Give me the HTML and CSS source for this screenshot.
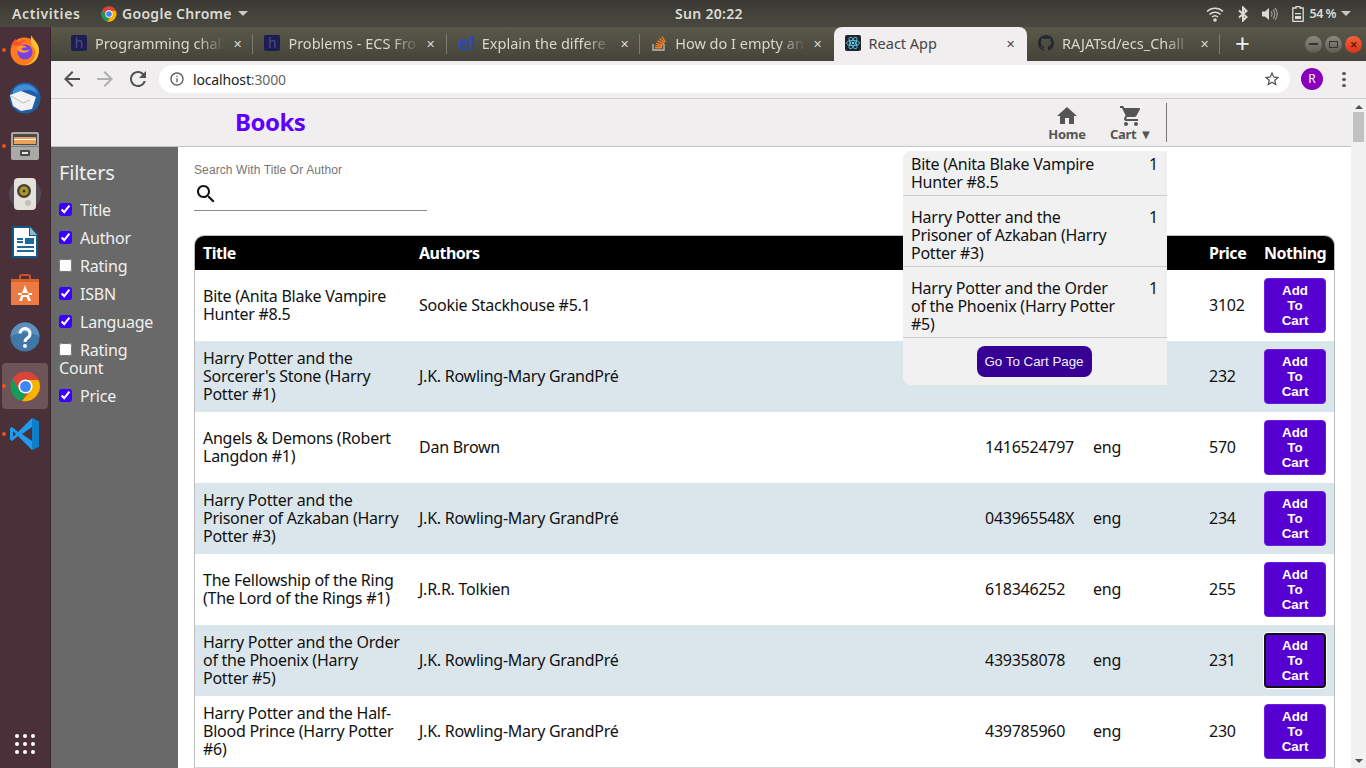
FILE: index.html
```html
<!DOCTYPE html>
<html lang="en">
<head>
    <meta charset="UTF-8">
    <meta name="viewport" content="width=device-width, initial-scale=1.0">
    <title>React App</title>

    <link rel="stylesheet" href="styles.css">
</head>
<body>

    <svg class="defs" width="0" height="0">
        <symbol id="chrome-logo" viewBox="0 0 48 48">
            <circle cx="24" cy="24" r="23" fill="#db4437"/>
            <path d="M24 24 4 35.500A23 23 0 0 1 4.100 12.500L14 29z" fill="#0f9d58"/>
            <path d="M4 35.500 14 29l10-5 4 3-9.500 19.300A23 23 0 0 1 4 35.500z" fill="#0f9d58"/>
            <path d="M24 14h20a23 23 0 0 1-25.500 32.300L33 29z" fill="#f4b400"/>
            <path d="M24 14h20A23 23 0 0 0 6 9.500L14.500 27z" fill="#db4437"/>
            <circle cx="24" cy="24" r="11" fill="#fff"/>
            <circle cx="24" cy="24" r="8.500" fill="#4285f4"/>
        </symbol>
    </svg>

    <!-- Ubuntu top bar -->
    <header class="topbar">
        <span class="topbar-item activities">Activities</span>
        <span class="topbar-item app-menu">
            <svg class="app-logo" width="16" height="16"><use href="#chrome-logo"/></svg>
            Google Chrome
            <span class="caret"></span>
        </span>
        <span class="clock">Sun 20:22</span>
        <div class="status">
            <svg class="status-wifi" width="18" height="16" viewBox="0 0 18 16"><path d="M1 5.500a11.500 11.500 0 0 1 16 0M3.500 8.500a8 8 0 0 1 11 0M6 11a4.500 4.500 0 0 1 6 0" fill="none" stroke="#dcdcd4" stroke-width="1.500"/><circle cx="9" cy="14" r="1.800" fill="#dcdcd4"/></svg>
            <svg class="status-bt" width="10" height="16" viewBox="0 0 10 16"><path d="M1 4.500 8.500 11 5 14.500v-13L8.500 5 1 11.500" fill="none" stroke="#dcdcd4" stroke-width="2"/></svg>
            <svg class="status-sound" width="16" height="14" viewBox="0 0 16 14"><path d="M0 4.500h3L7 1v12L3 9.500H0z" fill="#dcdcd4"/><path d="M9 4.500a3.500 3.500 0 0 1 0 5M11 2.500a6.500 6.500 0 0 1 0 9M13 1a9 9 0 0 1 0 12" fill="none" stroke="#9c9c94" stroke-width="1.200"/></svg>
            <svg class="status-battery" width="12" height="16" viewBox="0 0 12 16"><path d="M4 .500h4V2h3.200v13.500H.8V2H4z" fill="none" stroke="#dcdcd4" stroke-width="1.300"/><path d="M3 7h6v1.300H3zM3 10h6v3H3z" fill="#dcdcd4"/></svg>
            <span class="battery-text">54 %</span>
            <span class="caret"></span>
        </div>
    </header>

    <div class="desktop">

        <!-- Dock -->
        <aside class="dock">
            <div class="dock-item running">
                <svg width="32" height="32" viewBox="0 0 32 32">
                    <circle cx="15.500" cy="17.500" r="14" fill="#ff7a1f"/>
                    <path d="M22 1c1 4 9 8 8 17-1 8-7 13-14 13 8-2 12-9 10-15-1-3-4-4-4-8 0-3 0-5 0-7z" fill="#ffbe2e"/>
                    <path d="M2 12c1-4 3-6 5-7 0 2 1 3 3 3 3-2 6-2 8-1-4 0-6 2-6 4-4 1-7 0-10 1z" fill="#ff4f30"/>
                    <circle cx="16" cy="18" r="7.500" fill="#7542e5"/>
                    <path d="M8 13c3-2 8-2 10 1-3-1-5 0-6 1 3 2 6 2 9 0-1 3-6 5-10 3-2-1-3-3-3-5z" fill="#ff9a2e"/>
                </svg>
            </div>
            <div class="dock-item">
                <svg width="32" height="32" viewBox="0 0 32 32">
                    <circle cx="16" cy="16" r="15.500" fill="#1f5fa8"/>
                    <path d="M4 9c3-6 10-8 17-6 4 2 7 5 8 9-5-4-11-5-16-3L4 14z" fill="#3f8fd6"/>
                    <path d="M1 13 12 9l15 6-4 12-11 2-8-5z" fill="#f2f2f2"/>
                    <path d="m2 14 12 7 7-3" fill="none" stroke="#b9bdc4" stroke-width="1"/>
                </svg>
            </div>
            <div class="dock-item running">
                <svg width="30" height="30" viewBox="0 0 30 30">
                    <rect x="1" y="1" width="28" height="28" rx="2" fill="#a9a9a6"/>
                    <rect x="3" y="3" width="24" height="11" fill="#4c4a48"/>
                    <rect x="4" y="6" width="22" height="7" fill="#e9a25a"/>
                    <rect x="4" y="8" width="22" height="1" fill="#fff"/>
                    <rect x="1" y="15" width="28" height="1" fill="#7d7d7b"/>
                    <rect x="10" y="19" width="10" height="6" rx="1" fill="#4c4a48"/>
                    <rect x="12" y="21" width="6" height="2" fill="#e6e6e6"/>
                </svg>
            </div>
            <div class="dock-item">
                <svg width="34" height="34" viewBox="0 0 34 34">
                    <circle cx="17" cy="17" r="16" fill="#5f6a80" opacity=".45"/>
                    <rect x="6" y="1" width="22" height="32" rx="4" fill="#e4e2da"/>
                    <circle cx="16" cy="14" r="7" fill="#4a4536"/>
                    <circle cx="16" cy="14" r="4.500" fill="#b09a24"/>
                    <circle cx="16" cy="14" r="1.500" fill="#3a3628"/>
                    <circle cx="20" cy="26" r="3" fill="#c3c1b8"/>
                </svg>
            </div>
            <div class="dock-item">
                <svg width="26" height="32" viewBox="0 0 26 32">
                    <path d="M0 0h18l8 8v24H0z" fill="#0f5a86"/>
                    <path d="M2 2h15v8h7v20H2z" fill="#fff"/>
                    <path d="M18 1v8h7z" fill="#8fb7d0"/>
                    <path d="M5 12h6v2H5zM5 15h6v2H5zM13 12h9v6h-9zM5 20h17v2H5zM5 24h17v2H5z" fill="#1b6c9c"/>
                </svg>
            </div>
            <div class="dock-item">
                <svg width="30" height="32" viewBox="0 0 30 32">
                    <path d="M10 6V3a2 2 0 0 1 2-2h6a2 2 0 0 1 2 2v3" fill="none" stroke="#c9552a" stroke-width="2"/>
                    <path d="M1 5h28v26H1z" fill="#ed7a42"/>
                    <path d="M1 5h28v3H1z" fill="#d9622c"/>
                    <path d="M15 11 9 27h3l1.200-4h3.600l1.200 4h3L15 11zM8 19h14v2H8z" fill="#fff"/>
                </svg>
            </div>
            <div class="dock-item">
                <svg width="30" height="32" viewBox="0 0 30 32">
                    <circle cx="15" cy="15" r="14.500" fill="#3f77a8"/>
                    <path d="M.5 15a14.500 14.500 0 0 1 29 0c-6-6-23-6-29 0z" fill="#5b90bd"/>
                    <path d="M10 11.500a5 5 0 1 1 7.500 4.500c-1.800 1-2.500 1.800-2.500 4" fill="none" stroke="#fff" stroke-width="3"/>
                    <circle cx="15" cy="24" r="2" fill="#fff"/>
                </svg>
            </div>
            <div class="dock-item running active">
                <svg width="31" height="31"><use href="#chrome-logo"/></svg>
            </div>
            <div class="dock-item running">
                <svg width="30" height="32" viewBox="0 0 30 32">
                    <path d="M22 0 8 14 2 9 0 10.500v11L2 23l6-5 14 14 7-3.500V3.500z" fill="#1f9cf0"/>
                    <path d="M22 0v32l7-3.500V3.500z" fill="#0e7ec9"/>
                    <path d="M22 9 12 16l10 7z" fill="#4a3038"/>
                    <path d="M3 13v6l3-3z" fill="#4a3038"/>
                </svg>
            </div>
            <div class="apps-grid">
                <i></i><i></i><i></i><i></i><i></i><i></i><i></i><i></i><i></i>
            </div>
        </aside>

        <!-- Browser window -->
        <div class="browser">
            <div class="tabstrip">
                <div class="tab">
                    <span class="favicon favicon-h">h</span>
                    <span class="tab-title">Programming chall</span>
                    <span class="tab-close">&#10005;</span>
                </div>
                <div class="tab">
                    <span class="favicon favicon-h">h</span>
                    <span class="tab-title">Problems - ECS Fron</span>
                    <span class="tab-close">&#10005;</span>
                </div>
                <div class="tab">
                    <span class="favicon favicon-e">e!</span>
                    <span class="tab-title">Explain the differe</span>
                    <span class="tab-close">&#10005;</span>
                </div>
                <div class="tab no-sep">
                    <svg class="favicon" width="16" height="16" viewBox="0 0 16 16"><path d="M2 9v6h11V9" fill="none" stroke="#bcbbbb" stroke-width="1.300"/><path d="M4 12.800h7M4.200 10.600l7 .7M5 8.300l6.800 1.900M6.500 5.800l6.200 3.200M8.500 3.500l5 4.500M11 1.500l3.200 5.500" stroke="#f48024" stroke-width="1.400"/></svg>
                    <span class="tab-title">How do I empty an</span>
                    <span class="tab-close">&#10005;</span>
                </div>
                <div class="tab tab-active">
                    <svg class="favicon" width="16" height="16" viewBox="0 0 16 16">
                        <rect width="16" height="16" rx="2" fill="#20232a"/>
                        <g fill="none" stroke="#61dafb" stroke-width=".8"><ellipse cx="8" cy="8" rx="6.500" ry="2.600"/><ellipse cx="8" cy="8" rx="6.500" ry="2.600" transform="rotate(60 8 8)"/><ellipse cx="8" cy="8" rx="6.500" ry="2.600" transform="rotate(120 8 8)"/></g>
                        <circle cx="8" cy="8" r="1.300" fill="#61dafb"/>
                    </svg>
                    <span class="tab-title">React App</span>
                    <span class="tab-close">&#10005;</span>
                </div>
                <div class="tab">
                    <svg class="favicon" width="16" height="16" viewBox="0 0 16 16"><path fill="#24292e" d="M8 0C3.580 0 0 3.580 0 8c0 3.540 2.290 6.530 5.470 7.590.4.070.55-.17.55-.38 0-.19-.01-.82-.01-1.490-2.010.37-2.530-.49-2.690-.94-.09-.23-.48-.94-.82-1.130-.28-.15-.68-.52-.01-.53.63-.01 1.080.58 1.230.82.72 1.210 1.870.87 2.330.66.070-.52.28-.87.51-1.070-1.780-.2-3.640-.89-3.640-3.950 0-.87.31-1.590.82-2.150-.08-.2-.36-1.020.08-2.120 0 0 .67-.21 2.200.82.64-.18 1.320-.27 2-.27.68 0 1.360.09 2 .27 1.530-1.040 2.200-.82 2.200-.82.44 1.100.16 1.920.08 2.120.51.56.82 1.270.82 2.150 0 3.070-1.870 3.750-3.650 3.950.29.25.54.73.54 1.480 0 1.070-.01 1.930-.01 2.200 0 .21.15.46.55.38A8.013 8.013 0 0016 8c0-4.420-3.580-8-8-8z"/></svg>
                    <span class="tab-title">RAJATsd/ecs_Chall</span>
                    <span class="tab-close">&#10005;</span>
                </div>
                <span class="new-tab">+</span>
                <div class="window-controls">
                    <span class="win-btn"><i class="win-min"></i></span>
                    <span class="win-btn"><i class="win-max"></i></span>
                    <span class="win-btn win-close">&#10005;</span>
                </div>
            </div>

            <div class="toolbar">
                <svg class="tool-icon" width="24" height="24" viewBox="0 0 24 24"><path fill="#505050" d="M20 11H7.830l5.590-5.590L12 4l-8 8 8 8 1.410-1.410L7.830 13H20v-2z"/></svg>
                <svg class="tool-icon" width="24" height="24" viewBox="0 0 24 24"><path fill="#b0b0b0" d="M4 11h12.170l-5.590-5.590L12 4l8 8-8 8-1.410-1.410L16.170 13H4v-2z"/></svg>
                <svg class="tool-icon" width="24" height="24" viewBox="0 0 24 24"><path fill="#505050" d="M17.650 6.350A7.958 7.958 0 0012 4c-4.420 0-7.990 3.580-7.990 8s3.570 8 7.990 8c3.730 0 6.840-2.550 7.730-6h-2.080A5.990 5.990 0 0112 18c-3.310 0-6-2.690-6-6s2.690-6 6-6c1.660 0 3.140.69 4.220 1.780L13 11h7V4l-2.350 2.350z"/></svg>
                <div class="omnibox">
                    <svg width="16" height="16" viewBox="0 0 24 24"><path fill="#5a5a5a" d="M11 7h2v2h-2zm0 4h2v6h-2zm1-9C6.480 2 2 6.480 2 12s4.480 10 10 10 10-4.480 10-10S17.520 2 12 2zm0 18c-4.410 0-8-3.590-8-8s3.590-8 8-8 8 3.590 8 8-3.590 8-8 8z"/></svg>
                    <span class="url">localhost<span class="url-port">:3000</span></span>
                    <svg class="star" width="18" height="18" viewBox="0 0 24 24"><path fill="#505050" d="M22 9.240l-7.190-.62L12 2 9.190 8.630 2 9.240l5.460 4.730L5.820 21 12 17.270 18.180 21l-1.630-7.030L22 9.240zM12 15.400l-3.760 2.270 1-4.280-3.320-2.880 4.380-.38L12 6.100l1.710 4.040 4.380.38-3.320 2.880 1 4.280L12 15.400z"/></svg>
                </div>
                <span class="avatar">R</span>
                <span class="kebab"><i></i><i></i><i></i></span>
            </div>

            <div class="viewport">
                <div class="page">

                    <!-- App header -->
                    <div class="app-header">
                        <h1 class="brand">Books</h1>
                        <nav class="app-nav">
                            <a class="nav-link">
                                <svg width="24" height="24" viewBox="0 0 24 24"><path fill="#555" d="M10 20v-6h4v6h5v-8h3L12 3 2 12h3v8z"/></svg>
                                Home
                            </a>
                            <a class="nav-link">
                                <svg width="24" height="24" viewBox="0 0 24 24"><path fill="#555" d="M7 18c-1.100 0-1.990.9-1.990 2S5.900 22 7 22s2-.9 2-2-.9-2-2-2zM1 2v2h2l3.600 7.590-1.350 2.450c-.16.28-.25.61-.25.96 0 1.100.9 2 2 2h12v-2H7.420c-.14 0-.25-.11-.25-.25l.03-.12.9-1.630h7.450c.75 0 1.410-.41 1.750-1.030l3.580-6.490c.08-.14.12-.31.12-.48 0-.55-.45-1-1-1H5.210l-.94-2H1zm16 16c-1.100 0-1.990.9-1.990 2s.89 2 1.990 2 2-.9 2-2-.9-2-2-2z"/></svg>
                                Cart &#9660;
                            </a>
                        </nav>
                    </div>

                    <div class="app-body">

                        <!-- Filters -->
                        <aside class="filters">
                            <h2>Filters</h2>
                            <label class="filter"><input type="checkbox" checked> Title</label>
                            <label class="filter"><input type="checkbox" checked> Author</label>
                            <label class="filter"><input type="checkbox"> Rating</label>
                            <label class="filter"><input type="checkbox" checked> ISBN</label>
                            <label class="filter"><input type="checkbox" checked> Language</label>
                            <label class="filter"><input type="checkbox"> Rating Count</label>
                            <label class="filter"><input type="checkbox" checked> Price</label>
                        </aside>

                        <main class="content">
                            <div class="search">
                                <label class="search-label">Search With Title Or Author</label>
                                <div class="search-field">
                                    <svg width="24" height="24" viewBox="0 0 24 24"><path fill="#111" d="M15.500 14h-.79l-.28-.27C15.410 12.590 16 11.110 16 9.500 16 5.910 13.090 3 9.500 3S3 5.910 3 9.500 5.910 16 9.500 16c1.610 0 3.090-.59 4.230-1.570l.27.28v.79l5 4.990L20.490 19l-4.990-5zm-6 0C7.010 14 5 11.990 5 9.500S7.010 5 9.500 5 14 7.010 14 9.500 11.990 14 9.500 14z"/></svg>
                                </div>
                            </div>

                            <div class="table-wrap">
                                <table class="books">
                                    <colgroup>
                                        <col class="col-title">
                                        <col class="col-authors">
                                        <col class="col-isbn">
                                        <col class="col-lang">
                                        <col class="col-price">
                                        <col class="col-action">
                                    </colgroup>
                                    <thead>
                                        <tr>
                                            <th>Title</th>
                                            <th>Authors</th>
                                            <th></th>
                                            <th></th>
                                            <th>Price</th>
                                            <th>Nothing</th>
                                        </tr>
                                    </thead>
                                    <tbody>
                                        <tr>
                                            <td>Bite (Anita Blake Vampire Hunter #8.5</td>
                                            <td>Sookie Stackhouse #5.1</td>
                                            <td></td>
                                            <td></td>
                                            <td>3102</td>
                                            <td><button class="add-btn">Add To Cart</button></td>
                                        </tr>
                                        <tr>
                                            <td>Harry Potter and the Sorcerer's Stone (Harry Potter #1)</td>
                                            <td>J.K. Rowling-Mary GrandPré</td>
                                            <td></td>
                                            <td></td>
                                            <td>232</td>
                                            <td><button class="add-btn">Add To Cart</button></td>
                                        </tr>
                                        <tr>
                                            <td>Angels &amp; Demons (Robert Langdon #1)</td>
                                            <td>Dan Brown</td>
                                            <td>1416524797</td>
                                            <td>eng</td>
                                            <td>570</td>
                                            <td><button class="add-btn">Add To Cart</button></td>
                                        </tr>
                                        <tr>
                                            <td>Harry Potter and the Prisoner of Azkaban (Harry Potter #3)</td>
                                            <td>J.K. Rowling-Mary GrandPré</td>
                                            <td>043965548X</td>
                                            <td>eng</td>
                                            <td>234</td>
                                            <td><button class="add-btn">Add To Cart</button></td>
                                        </tr>
                                        <tr>
                                            <td>The Fellowship of the Ring (The Lord of the Rings #1)</td>
                                            <td>J.R.R. Tolkien</td>
                                            <td>618346252</td>
                                            <td>eng</td>
                                            <td>255</td>
                                            <td><button class="add-btn">Add To Cart</button></td>
                                        </tr>
                                        <tr>
                                            <td>Harry Potter and the Order of the Phoenix (Harry Potter #5)</td>
                                            <td>J.K. Rowling-Mary GrandPré</td>
                                            <td>439358078</td>
                                            <td>eng</td>
                                            <td>231</td>
                                            <td><button class="add-btn focused">Add To Cart</button></td>
                                        </tr>
                                        <tr>
                                            <td>Harry Potter and the Half-Blood Prince (Harry Potter #6)</td>
                                            <td>J.K. Rowling-Mary GrandPré</td>
                                            <td>439785960</td>
                                            <td>eng</td>
                                            <td>230</td>
                                            <td><button class="add-btn">Add To Cart</button></td>
                                        </tr>
                                    </tbody>
                                </table>
                            </div>
                        </main>
                    </div>

                    <!-- Cart dropdown -->
                    <div class="cart-menu">
                        <div class="cart-row">
                            <span>Bite (Anita Blake Vampire Hunter #8.5</span>
                            <span>1</span>
                        </div>
                        <div class="cart-row">
                            <span>Harry Potter and the Prisoner of Azkaban (Harry Potter #3)</span>
                            <span>1</span>
                        </div>
                        <div class="cart-row">
                            <span>Harry Potter and the Order of the Phoenix (Harry Potter #5)</span>
                            <span>1</span>
                        </div>
                        <div class="cart-footer">
                            <button class="cart-btn">Go To Cart Page</button>
                        </div>
                    </div>
                </div>

                <div class="scrollbar">
                    <span class="arrow-up"></span>
                    <span class="thumb"></span>
                    <span class="arrow-down"></span>
                </div>
            </div>
        </div>
    </div>

</body>
</html>
```

FILE: styles.css
```css
/* Global Reset */
* {
    margin: 0;
    padding: 0;
    box-sizing: border-box;
}

body {
    width: 1366px;
    height: 768px;
    overflow: hidden;
    display: flex;
    flex-direction: column;
    font-family: "Noto Sans", sans-serif;
    color: #111;
    background-color: #4a3038;
}

.defs {
    position: absolute;
}

/* Top Bar */
.topbar {
    height: 27px;
    flex: none;
    display: flex;
    align-items: center;
    position: relative;
    padding-left: 12px;
    background: linear-gradient(#3a3933, #4a4941);
    color: #dcdcd4;
    font-size: 14px;
    font-weight: 600;
    letter-spacing: .3px;
}

.activities {
    width: 89px;
    letter-spacing: .6px;
}

.app-menu {
    display: flex;
    align-items: center;
    gap: 5px;
}

.caret {
    display: inline-block;
    width: 0;
    height: 0;
    margin-left: 1px;
    border-left: 5px solid transparent;
    border-right: 5px solid transparent;
    border-top: 5px solid #c8c8c0;
}

.clock {
    position: absolute;
    left: 675px;
}

.status {
    margin-left: auto;
    display: flex;
    align-items: center;
    padding-right: 15px;
    gap: 14px;
}

.battery-text {
    margin-left: -8px;
    margin-right: -10px;
    font-size: 12.500px;
    letter-spacing: -.5px;
}

/* Dock */
.desktop {
    flex: 1;
    display: flex;
    min-height: 0;
}

.dock {
    width: 51px;
    flex: none;
    display: flex;
    flex-direction: column;
    gap: 2px;
    align-items: center;
    background-color: #4a3038;
    border-right: 1px solid #38262c;
}

.dock-item {
    width: 46px;
    height: 46px;
    flex: none;
    position: relative;
    display: flex;
    align-items: center;
    justify-content: center;
    border-radius: 4px;
}

.dock-item.active {
    background-color: #6c5459;
}

.dock-item.running::before {
    content: "";
    position: absolute;
    left: 0;
    top: 21px;
    width: 4px;
    height: 4px;
    border-radius: 50%;
    background-color: #e95420;
}

.apps-grid {
    margin-top: auto;
    margin-bottom: 14px;
    display: grid;
    grid-template-columns: repeat(3, 4px);
    gap: 4px;
}

.apps-grid i {
    width: 4px;
    height: 4px;
    border-radius: 50%;
    background-color: #fff;
}

/* Browser Chrome */
.browser {
    flex: 1;
    min-width: 0;
    display: flex;
    flex-direction: column;
}

.tabstrip {
    height: 34px;
    flex: none;
    display: flex;
    align-items: stretch;
    padding-left: 9px;
    background: linear-gradient(#5a5849, #45443a);
}

.tab {
    width: 193.400px;
    display: flex;
    align-items: center;
    padding: 0 8px 2px 11px;
    position: relative;
    color: #d8d7d0;
    font-size: 14.500px;
}

.tab::after {
    content: "";
    position: absolute;
    right: 0;
    top: 7px;
    height: 20px;
    width: 1px;
    background-color: #7c7b70;
}

.tab.no-sep::after,
.tab-active::after {
    display: none;
}

.tab-active {
    background-color: #f0eeee;
    color: #444;
    border-radius: 8px 8px 0 0;
}

.favicon {
    width: 16px;
    height: 16px;
    flex: none;
    margin-right: 8px;
}

.favicon-h {
    background-color: #1d1d53;
    color: #4b4b82;
    text-align: center;
    font-size: 14px;
    line-height: 15px;
    border-radius: 2px;
}

.favicon-e {
    color: #2a4ab0;
    font-size: 20px;
    font-weight: 700;
    line-height: 16px;
    letter-spacing: -1px;
    white-space: nowrap;
}

.tab-title {
    flex: 1;
    min-width: 0;
    white-space: nowrap;
    -webkit-mask-image: linear-gradient(to right, #000 80%, transparent 102%);
    mask-image: linear-gradient(to right, #000 80%, transparent 102%);
}

.tab-active .tab-title {
    -webkit-mask-image: none;
    mask-image: none;
}

.tab-close {
    width: 16px;
    margin-left: 6px;
    text-align: center;
    font-size: 11px;
}

.new-tab {
    width: 44px;
    text-align: center;
    color: #eee;
    font-size: 26px;
    line-height: 32px;
    font-weight: 400;
}

.window-controls {
    margin-left: auto;
    display: flex;
    align-items: center;
    gap: 3px;
    padding-right: 4px;
}

.win-btn {
    width: 17px;
    height: 17px;
    border-radius: 50%;
    display: flex;
    align-items: center;
    justify-content: center;
    background: linear-gradient(#8a897f, #5f5e54);
    color: #6b1408;
    font-size: 9px;
    font-weight: 700;
}

.win-min {
    width: 9px;
    height: 2px;
    background-color: #35342e;
}

.win-max {
    width: 9px;
    height: 7px;
    border: 1px solid #35342e;
}

.win-close {
    background: linear-gradient(#f4633a, #d9341a);
}

.toolbar {
    height: 38px;
    flex: none;
    display: flex;
    align-items: center;
    padding: 0 0 1px 9px;
    gap: 9px;
    background-color: #f0eeee;
    border-bottom: 1px solid #cfcdcd;
}

.omnibox {
    width: 1131px;
    height: 28px;
    display: flex;
    align-items: center;
    padding: 0 9px 0 10px;
    border-radius: 14px;
    background-color: #fff;
    font-size: 14px;
    letter-spacing: -.15px;
}

.url {
    margin-left: 8px;
    color: #222;
}

.url-port {
    color: #666;
}

.star {
    margin-left: auto;
}

.avatar {
    width: 22px;
    height: 22px;
    margin-left: 2px;
    border-radius: 50%;
    background-color: #8800bb;
    color: #fff;
    font-size: 12px;
    line-height: 22px;
    text-align: center;
}

.kebab {
    display: flex;
    flex-direction: column;
    flex: none;
    gap: 3px;
    margin-left: 10px;
}

.kebab i {
    width: 4px;
    height: 3px;
    border-radius: 50%;
    background-color: #505050;
}

/* Page */
.viewport {
    flex: 1;
    min-height: 0;
    display: flex;
}

.page {
    flex: 1;
    min-width: 0;
    position: relative;
    display: flex;
    flex-direction: column;
    background-color: #fff;
}

.app-header {
    height: 48px;
    flex: none;
    display: flex;
    align-items: center;
    padding: 0 0 2px 184px;
    background-color: #f0eeee;
    border-bottom: 1px solid #c4c4c4;
}

.brand {
    color: #5f00ff;
    font-size: 24px;
    font-weight: 700;
    letter-spacing: -.5px;
}

.app-nav {
    position: absolute;
    left: 984px;
    top: 4px;
    width: 132px;
    height: 39px;
    display: flex;
    border-right: 1px solid #777;
}

.nav-link {
    width: 64px;
    display: flex;
    flex-direction: column;
    align-items: center;
    padding-top: 1px;
    color: #555;
    font-size: 13px;
    font-weight: 700;
    line-height: 15px;
    letter-spacing: -.3px;
    white-space: nowrap;
}

.nav-link svg {
    margin-bottom: -1px;
}

.app-body {
    flex: 1;
    min-height: 0;
    display: flex;
}

/* Filters */
.filters {
    width: 127px;
    flex: none;
    padding: 14px 8px;
    background-color: #696969;
    color: #f0f0f0;
    font-size: 16px;
    line-height: 18px;
    letter-spacing: -.2px;
}

.filters h2 {
    font-size: 20px;
    font-weight: 400;
    line-height: 24px;
    margin-bottom: 16px;
}

.filter {
    display: block;
    margin-bottom: 10px;
}

.filter input {
    width: 13px;
    height: 13px;
    margin-right: 4px;
    accent-color: #3700ff;
}

/* Search */
.content {
    flex: 1;
    min-width: 0;
    padding: 16px;
}

.search {
    width: 233px;
    margin-bottom: 24px;
}

.search-label {
    display: block;
    color: #757575;
    font-family: "Liberation Sans", sans-serif;
    font-size: 12px;
    line-height: 14px;
    letter-spacing: .1px;
}

.search-field {
    height: 34px;
    padding-top: 5px;
    border-bottom: 1px solid #8a8a8a;
}

/* Table Styles */
.table-wrap {
    border: 1px solid #bdbdbd;
    border-bottom-color: #d5d5d5;
    border-radius: 10px 10px 0 0;
    overflow: hidden;
}

.books {
    width: 100%;
    table-layout: fixed;
    border-collapse: collapse;
    font-size: 16px;
    line-height: 18px;
    letter-spacing: -.25px;
}

.col-title { width: 216px; }
.col-authors { width: 566px; }
.col-isbn { width: 108px; }
.col-lang { width: 116px; }
.col-price { width: 55px; }

.books th {
    height: 34px;
    padding: 0 8px;
    background-color: #000;
    color: #fff;
    text-align: left;
    letter-spacing: -.5px;
    white-space: nowrap;
}

.books td {
    padding: 7px 8px 9px;
}

.books td:last-child {
    padding: 8px;
}

.books tbody tr:nth-child(even) {
    background-color: #dbe6ec;
}

.add-btn {
    display: block;
    width: 62px;
    height: 55px;
    padding: 0 10px;
    background-color: #5500d0;
    color: #fff;
    border: 1px solid #6a1fe0;
    border-radius: 4px;
    font-family: "Liberation Sans", sans-serif;
    font-size: 13.330px;
    font-weight: 700;
    line-height: 15px;
}

.add-btn.focused {
    border: 2px solid #111;
    box-shadow: 0 0 0 1px #fff;
}

/* Cart Dropdown */
.cart-menu {
    position: absolute;
    left: 852px;
    top: 52px;
    width: 264px;
    background-color: #f1f1f1;
    border-radius: 8px 0 0 8px;
    font-size: 16px;
    line-height: 18px;
    letter-spacing: -.25px;
}

.cart-row {
    display: flex;
    justify-content: space-between;
    gap: 24px;
    padding: 12px 9px 4px 8px;
    border-bottom: 1px solid #cccccc;
}

.cart-row:first-child {
    padding-top: 4px;
}

.cart-row span:last-child {
    flex: none;
}

.cart-footer {
    height: 47px;
    display: flex;
    align-items: flex-start;
    justify-content: center;
    padding: 8px 2px 0 0;
}

.cart-btn {
    width: 115px;
    height: 31px;
    border: none;
    border-radius: 8px;
    background-color: #370094;
    color: #f4f0ff;
    font-family: "Liberation Sans", sans-serif;
    font-size: 13.330px;
}

/* Scrollbar */
.scrollbar {
    width: 15px;
    flex: none;
    display: flex;
    flex-direction: column;
    align-items: center;
    background-color: #f1f1f1;
}

.thumb {
    width: 11px;
    height: 30px;
    margin-top: 3px;
    background-color: #c1c1c1;
}

.arrow-up,
.arrow-down {
    width: 0;
    height: 0;
    border-left: 4px solid transparent;
    border-right: 4px solid transparent;
}

.arrow-up {
    margin-top: 6px;
    border-bottom: 4px solid #505050;
}

.arrow-down {
    margin-top: auto;
    margin-bottom: 5px;
    border-top: 4px solid #505050;
}
```
